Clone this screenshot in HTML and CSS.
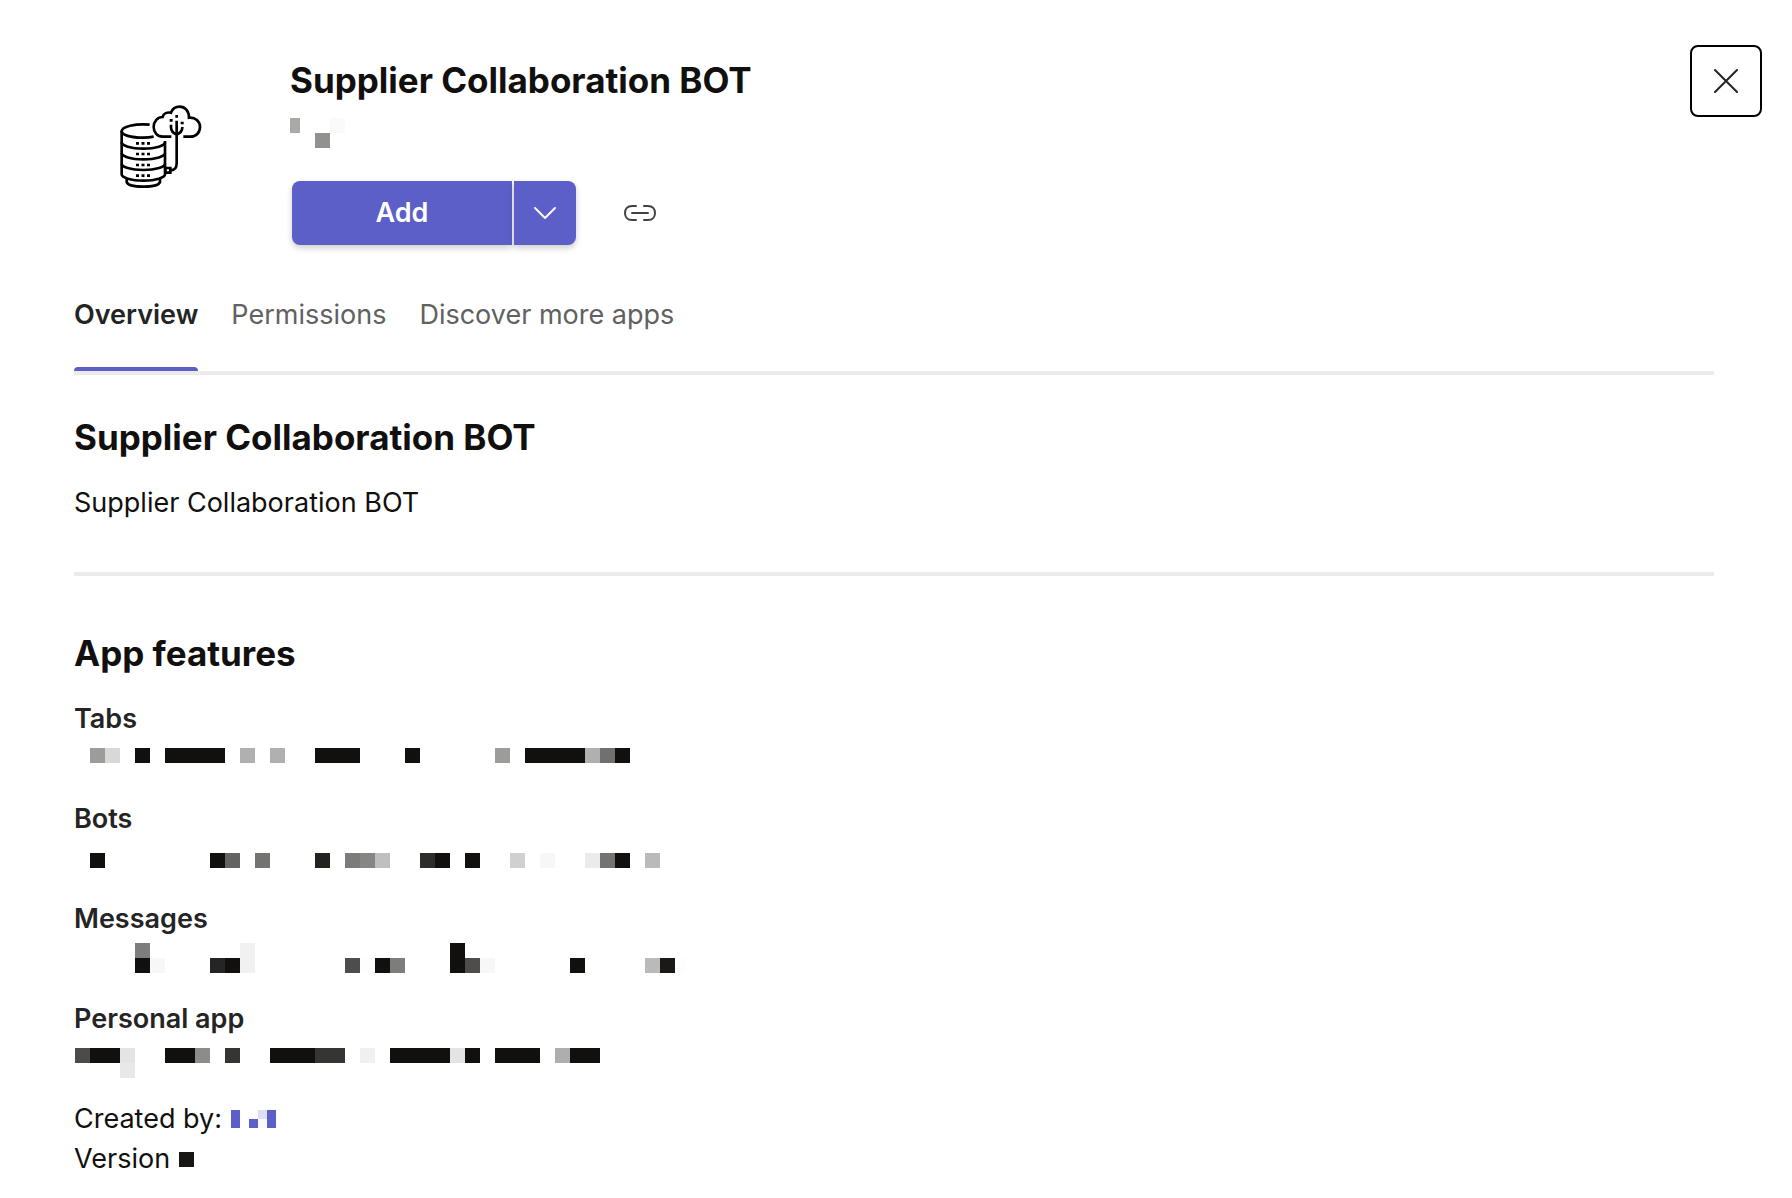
FILE: index.html
```html
<!DOCTYPE html>
<html lang="en">
<head>
<meta charset="utf-8">
<meta name="viewport" content="width=device-width, initial-scale=1">
<title>Supplier Collaboration BOT</title>
<link rel="stylesheet" href="styles.css">
</head>
<body>
<header class="app-header">
  <svg class="app-logo" viewBox="0 0 360 330" fill="none" stroke="#000" stroke-width="8" aria-hidden="true">
    <path d="M149 104C105 101 65 109 65 124C65 135 92 143 130 143C142 143 152 142 161 140"/>
    <path d="M65 122V253C65 263 92 272 130 272C168 272 195 263 195 253V153"/>
    <path d="M65 157C65 167 92 176 130 176C168 176 195 167 195 157"/>
    <path d="M65 189C65 199 92 208 130 208C168 208 195 199 195 189"/>
    <path d="M65 221C65 231 92 240 130 240C168 240 195 231 195 221"/>
    <path d="M80 266V276C83 285 103 290 130 290C157 290 177 285 180 276V266"/>
    <path d="M214 140H188C172 140 161 127 161 111C161 94 173 81 188 81C190 72 200 66 213 68C217 57 227 50 239 50C255 50 267 63 267 83C286 81 300 94 300 111C300 128 288 140 272 140H250"/>
    <path d="M230 92V220C230 234 225 241 212 241M213 104V112C213 124 219 128 230 134C241 128 247 124 247 112V111"/>
    <path d="M196 234H211V248H196Z"/>
    <path d="M108 160H150M108 192H150M108 225H150M108 257H150" stroke-dasharray="9 7.5"/>
    <path d="M226 79H234M209 91H218M242 99H251"/>
  </svg>
  <div class="app-summary">
    <h1 class="heading">Supplier Collaboration BOT</h1>
    <svg class="publisher" viewBox="0 0 60 48" role="img" aria-label="Publisher hidden">
      <path fill="#a9a9a8" d="M0 14h10v15H0z"/><path fill="#92918f" d="M25 29h15v15H25z"/><path fill="#fafafa" d="M40 14h15v15H40z"/>
    </svg>
    <div class="actions">
      <button class="button button-add" type="button">Add</button>
      <button class="button button-more" type="button" aria-label="More add options">
        <svg width="24" height="24" viewBox="0 0 24 24" fill="none" stroke="#fff" stroke-width="2" stroke-linecap="round" stroke-linejoin="round"><path d="M2 7l10 10L22 7"/></svg>
      </button>
      <button class="icon-button" type="button" aria-label="Copy link">
        <svg width="32" height="32" viewBox="0 0 32 32" fill="none" stroke="#424242" stroke-width="2" stroke-linecap="round"><path d="M12 9H8C3.500 9 1 12 1 16s2.500 7 7 7h4M20 9h4c4.500 0 7 3 7 7s-2.500 7-7 7h-4M8 16h16"/></svg>
      </button>
    </div>
  </div>
  <button class="close-button" type="button" aria-label="Close">
    <svg width="24" height="24" viewBox="0 0 24 24" fill="none" stroke="#242424" stroke-width="2" stroke-linecap="round"><path d="M1 1l22 22M23 1L1 23"/></svg>
  </button>
</header>

<main class="content">
  <nav class="tabs" aria-label="App details">
    <a class="tab tab-active" href="#overview" aria-current="page">Overview</a>
    <a class="tab" href="#permissions">Permissions</a>
    <a class="tab" href="#discover">Discover more apps</a>
  </nav>

  <section class="overview" id="overview">
    <h2 class="heading">Supplier Collaboration BOT</h2>
    <p class="text">Supplier Collaboration BOT</p>
  </section>

  <section class="features">
    <h2 class="heading">App features</h2>
    <div class="feature">
      <h3 class="label">Tabs</h3>
      <svg class="redacted" viewBox="-1 0 611 40" role="img" aria-label="Hidden text">
        <path fill="#11100f" d="M60 9h15v15H60zM90 9h60v15H90zM240 9h45v15h-45zM330 9h15v15h-15zM450 9h60v15h-60zM540 9h15v15h-15z"/>
        <path fill="#9c9c9a" d="M15 9h15v15H15zM420 9h15v15h-15z"/>
        <path fill="#d8d8d6" d="M30 9h15v15H30z"/>
        <path fill="#b0b0b0" d="M165 9h15v15h-15zM195 9h15v15h-15zM510 9h15v15h-15z"/>
        <path fill="#70706e" d="M525 9h15v15h-15z"/>
      </svg>
    </div>
    <div class="feature">
      <h3 class="label">Bots</h3>
      <svg class="redacted" viewBox="-1 0 611 40" role="img" aria-label="Hidden text">
        <path fill="#11100f" d="M15 14h15v15H15zM135 14h15v15h-15zM360 14h15v15h-15zM390 14h15v15h-15zM540 14h15v15h-15z"/>
        <path fill="#636361" d="M150 14h15v15h-15z"/>
        <path fill="#737372" d="M180 14h15v15h-15zM525 14h15v15h-15z"/>
        <path fill="#242320" d="M240 14h15v15h-15z"/>
        <path fill="#7b7b79" d="M270 14h15v15h-15z"/>
        <path fill="#868685" d="M285 14h15v15h-15z"/>
        <path fill="#bfbfbf" d="M300 14h15v15h-15z"/>
        <path fill="#2d2d2b" d="M345 14h15v15h-15z"/>
        <path fill="#d0d0d0" d="M435 14h15v15h-15z"/>
        <path fill="#f7f7f7" d="M465 14h15v15h-15z"/>
        <path fill="#ebebeb" d="M510 14h15v15h-15z"/>
        <path fill="#bababa" d="M570 14h15v15h-15z"/>
      </svg>
    </div>
    <div class="feature">
      <h3 class="label">Messages</h3>
      <svg class="redacted" viewBox="-1 0 611 40" role="img" aria-label="Hidden text">
        <path fill="#11100f" d="M60 19h15v15H60zM150 19h15v15h-15zM300 19h15v15h-15zM375 4h15v30h-15zM495 19h15v15h-15z"/>
        <path fill="#7d7d7b" d="M60 4h15v15H60zM315 19h15v15h-15z"/>
        <path fill="#f7f7f7" d="M75 19h15v15H75zM405 19h15v15h-15z"/>
        <path fill="#252525" d="M135 19h15v15h-15z"/>
        <path fill="#f1f1f1" d="M165 4h15v30h-15z"/>
        <path fill="#4e4d4b" d="M270 19h15v15h-15zM390 19h15v15h-15z"/>
        <path fill="#fdfdfd" d="M285 19h15v15h-15zM600 19h10v15h-10z"/>
        <path fill="#bababa" d="M570 19h15v15h-15z"/>
        <path fill="#1a1917" d="M585 19h15v15h-15z"/>
      </svg>
    </div>
    <div class="feature">
      <h3 class="label">Personal app</h3>
      <svg class="redacted" viewBox="-1 0 611 40" role="img" aria-label="Hidden text">
        <path fill="#11100f" d="M15 9h30v15H15zM90 9h30v15H90zM195 9h45v15h-45zM315 9h60v15h-60zM390 9h15v15h-15zM420 9h45v15h-45zM495 9h30v15h-30z"/>
        <path fill="#4c4b49" d="M0 9h15v15H0z"/>
        <path fill="#e4e4e4" d="M45 9h15v15H45zM375 9h15v15h-15z"/>
        <path fill="#e8e8e6" d="M45 24h15v15H45z"/>
        <path fill="#8c8c8a" d="M120 9h15v15h-15z"/>
        <path fill="#353534" d="M150 9h15v15h-15zM240 9h30v15h-30z"/>
        <path fill="#f0f0f0" d="M285 9h15v15h-15z"/>
        <path fill="#aeaeae" d="M480 9h15v15h-15z"/>
      </svg>
    </div>
    <p class="text meta">Created by:
      <a class="creator" href="#creator" aria-label="Creator hidden"><svg width="45" height="18" viewBox="0 0 45 18"><path fill="#5b5fc7" d="M0 0h9v18H0zM18 9h9v9h-9zM36 0h9v18h-9z"/><path fill="#dedff6" d="M27 0h9v9h-9z"/><path fill="#f8f8fe" d="M27 9h9v9h-9z"/></svg></a>
    </p>
    <p class="text meta">Version
      <svg width="15" height="15" viewBox="0 0 15 15" role="img" aria-label="Version hidden"><path fill="#171614" d="M0 0h15v15H0z"/></svg>
    </p>
  </section>
</main>
</body>
</html>
```
FILE: styles.css
```css
* {
  box-sizing: border-box;
}

body {
  margin: 0;
  background: #fff;
  color: #11100f;
  font-family: Inter, "Liberation Sans", sans-serif;
  font-size: 27px;
  line-height: 40px;
}

h1, h2, h3, p {
  margin: 0;
}

svg {
  display: block;
}

button {
  padding: 0;
  border: 0;
  background: none;
  font: inherit;
  cursor: pointer;
}

.heading {
  font-size: 35px;
  font-weight: 700;
  line-height: 46px;
}

.app-header {
  display: flex;
  align-items: flex-start;
  padding: 45px 30px 0 74px;
}

.app-logo {
  flex: none;
  width: 120px;
  height: 110px;
  margin: 45px 70px 0 26px;
}

.app-summary {
  flex: 1;
  padding-top: 12px;
}

.publisher {
  width: 60px;
  height: 48px;
  margin-top: 1px;
}

.actions {
  display: flex;
  align-items: center;
  margin: 29px 0 0 2px;
}

.button {
  display: flex;
  align-items: center;
  justify-content: center;
  height: 64px;
  background: #5b5fc7;
  color: #fff;
  font-weight: 600;
  box-shadow: 0 3px 6px rgba(0, 0, 0, 0.2);
}

.button-add {
  width: 220px;
  border-radius: 8px 0 0 8px;
}

.button-more {
  width: 62px;
  margin-left: 2px;
  border-radius: 0 8px 8px 0;
}

.icon-button {
  display: flex;
  align-items: center;
  justify-content: center;
  width: 64px;
  height: 64px;
  margin-left: 32px;
}

.close-button {
  display: flex;
  flex: none;
  align-items: center;
  justify-content: center;
  width: 72px;
  height: 72px;
  border: 2px solid #000;
  border-radius: 8px;
}

.content {
  padding: 50px 78px 20px 74px;
}

.tabs {
  display: flex;
  gap: 33px;
  border-bottom: 4px solid #edebe9;
}

.tab {
  position: relative;
  padding-bottom: 36px;
  color: #616161;
  text-decoration: none;
}

.tab-active {
  color: #242424;
  font-weight: 600;
}

.tab-active::after {
  content: "";
  position: absolute;
  right: 0;
  bottom: 0;
  left: 0;
  height: 4px;
  border-radius: 4px 4px 0 0;
  background: #5b5fc7;
}

.overview {
  padding: 39px 0 49px;
  border-bottom: 4px solid #edebe9;
}

.overview .text {
  margin-top: 23px;
}

.features {
  padding-top: 54px;
}

.features .heading {
  margin-bottom: 23px;
}

.feature {
  margin-bottom: 20px;
}

.label {
  color: #242424;
  font-size: 27px;
  font-weight: 600;
}

.redacted {
  width: 611px;
  height: 40px;
}

.meta {
  display: flex;
  align-items: center;
  gap: 9px;
}
```
